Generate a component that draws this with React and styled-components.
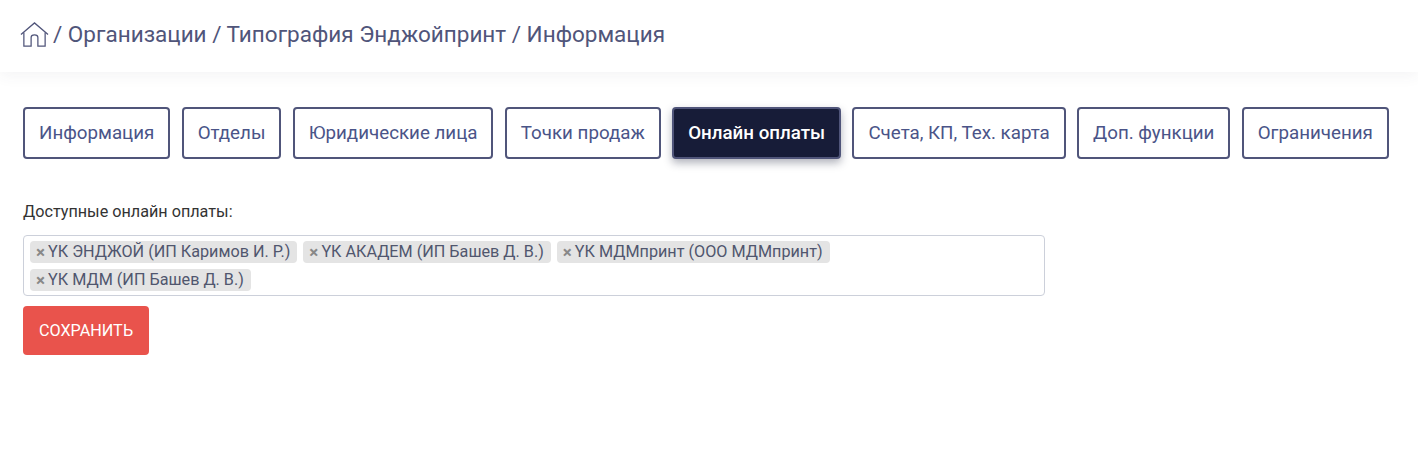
import React from 'react'
import styled, { createGlobalStyle } from 'styled-components'

const tabs = [
  'Информация',
  'Отделы',
  'Юридические лица',
  'Точки продаж',
  'Онлайн оплаты',
  'Счета, КП, Тех. карта',
  'Доп. функции',
  'Ограничения',
]

const payments = [
  'ҮК ЭНДЖОЙ (ИП Каримов И. Р.)',
  'ҮК АКАДЕМ (ИП Башев Д. В.)',
  'ҮК МДМпринт (ООО МДМпринт)',
  'ҮК МДМ (ИП Башев Д. В.)',
]

const App = () => (
  <>
    <GlobalStyle />
    <Header>
      <HomeIcon viewBox="0 0 30 26" fill="none" stroke="#50557a" strokeWidth="1.3">
        <path d="M1 13 L15 1 L29 13" />
        <path d="M4 11 V25 H11.5 V16 Q11.5 13.5 15 13.5 Q18.5 13.5 18.5 16 V25 H26 V11" />
      </HomeIcon>
      <Crumbs>/ Организации / Типография Энджойпринт / Информация</Crumbs>
    </Header>
    <Main>
      <TabRow>
        {tabs.map((tab) => (
          <Tab key={tab} $active={tab === 'Онлайн оплаты'}>
            {tab}
          </Tab>
        ))}
      </TabRow>
      <FieldLabel>Доступные онлайн оплаты:</FieldLabel>
      <MultiSelect>
        {payments.map((item) => (
          <Chip key={item}>
            <ChipRemove>×</ChipRemove>
            {item}
          </Chip>
        ))}
      </MultiSelect>
      <SaveButton>СОХРАНИТЬ</SaveButton>
    </Main>
  </>
)

const GlobalStyle = createGlobalStyle`
  body {
    margin: 0;
    background: #fff;
    font-family: Roboto, "Liberation Sans", sans-serif;
  }
`

const Header = styled.header`
  height: 72px;
  padding: 0 20px;
  box-sizing: border-box;
  display: flex;
  align-items: center;
  gap: 4px;
  background: #fff;
  box-shadow: 0 4px 14px rgba(60, 70, 90, 0.06);
`

const HomeIcon = styled.svg`
  width: 29px;
  height: 27px;
  margin-bottom: 4px;
`

const Crumbs = styled.div`
  font-size: 22.5px;
  color: #50557a;
  margin-bottom: 4px;
`

const Main = styled.main`
  padding: 35px 23px 0;
`

const TabRow = styled.div`
  display: flex;
  gap: 11.3px;
`

const Tab = styled.button`
  height: 52px;
  padding: 0 14px;
  border: 2px solid #50557a;
  border-radius: 4px;
  font-family: inherit;
  font-size: 18.75px;
  color: ${(p) => (p.$active ? '#fff' : '#4a5488')};
  font-weight: ${(p) => (p.$active ? 500 : 400)};
  background: ${(p) => (p.$active ? '#171c38' : '#fff')};
  box-shadow: ${(p) => (p.$active ? '0 4px 8px rgba(30, 35, 60, 0.35)' : 'none')};
`

const FieldLabel = styled.div`
  margin-top: 44px;
  font-size: 16.2px;
  line-height: 18px;
  color: #333;
`

const MultiSelect = styled.div`
  width: 1022px;
  height: 61px;
  margin-top: 14px;
  padding: 5px 6px;
  box-sizing: border-box;
  display: flex;
  flex-wrap: wrap;
  align-content: flex-start;
  gap: 6px;
  border: 1px solid #ccd0da;
  border-radius: 4px;
`

const Chip = styled.span`
  height: 22px;
  padding: 0 7px 1px 6px;
  box-sizing: border-box;
  display: inline-flex;
  align-items: center;
  border-radius: 4px;
  background: #e4e4e4;
  font-size: 16.2px;
  color: #50566e;
`

const ChipRemove = styled.span`
  margin-right: 3px;
  color: #888;
  font-weight: 700;
  font-size: 17px;
`

const SaveButton = styled.button`
  display: block;
  width: 126px;
  height: 49px;
  margin-top: 10px;
  border: 0;
  border-radius: 4px;
  background: #e9534c;
  color: #fff;
  font-family: inherit;
  font-size: 16.2px;
`

export default App
